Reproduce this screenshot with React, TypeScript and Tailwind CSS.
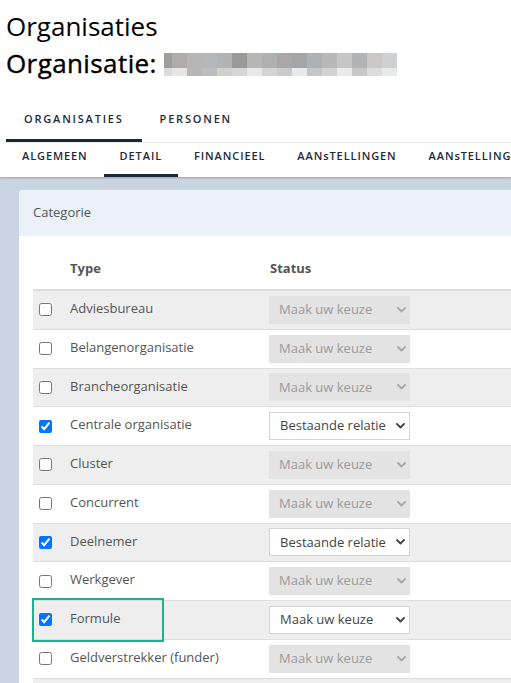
import React from "react";

// pixelated placeholder that hides the organisation name
const BLUR_TOP = ["#a09e9c", "#aeadab", "#b7b6b4", "#b5b8ba", "#b2b3b4", "#9a9a98", "#b7b6b4", "#b0b0b0", "#aba7a5", "#a3a5a7", "#adb1b3", "#b9b8b6", "#c6c6c6", "#b2b3b5", "#c9c8c6", "#cfd0d2"];
const BLUR_BOTTOM = ["#dcdcdc", "#e6e6e6", "#b8b5b3", "#b8bdc0", "#d0d0d0", "#d6d6d6", "#e8e8e8", "#d4d4d4", "#cacaca", "#e8e9ea", "#c6c6c6", "#d2d2d2", "#eaeaea", "#c8c8c8", "#dddddd", "#e8e9eb"];

const ROWS: { label: string; checked: boolean; status: string }[] = [
  { label: "Adviesbureau", checked: false, status: "Maak uw keuze" },
  { label: "Belangenorganisatie", checked: false, status: "Maak uw keuze" },
  { label: "Brancheorganisatie", checked: false, status: "Maak uw keuze" },
  { label: "Centrale organisatie", checked: true, status: "Bestaande relatie" },
  { label: "Cluster", checked: false, status: "Maak uw keuze" },
  { label: "Concurrent", checked: false, status: "Maak uw keuze" },
  { label: "Deelnemer", checked: true, status: "Bestaande relatie" },
  { label: "Werkgever", checked: false, status: "Maak uw keuze" },
  { label: "Formule", checked: true, status: "Maak uw keuze" },
  { label: "Geldverstrekker (funder)", checked: false, status: "Maak uw keuze" },
];

const MAIN_TABS = ["ORGANISATIES", "PERSONEN"];
const SUB_TABS = ["ALGEMEEN", "DETAIL", "FINANCIEEL", "AANsTELLINGEN", "AANsTELLINGEN"];

function Chevron({ disabled }: { disabled: boolean }) {
  return (
    <svg width="9" height="6" viewBox="0 0 9 6" className="shrink-0">
      <path
        d="M1 1 L4.5 4.5 L8 1"
        fill="none"
        stroke={disabled ? "#a8a8a8" : "#444"}
        strokeWidth="1.8"
        strokeLinecap="round"
        strokeLinejoin="round"
      />
    </svg>
  );
}

function StatusSelect({ value, disabled }: { value: string; disabled: boolean }) {
  return (
    <div
      className={
        disabled
          ? "w-[141px] h-[28px] flex items-center justify-between pl-[10px] pr-[4px] bg-[#e3e3e3] text-[#9a9a9a] text-[13px] whitespace-nowrap overflow-hidden"
          : "w-[141px] h-[28px] flex items-center justify-between pl-[10px] pr-[4px] bg-white border border-[#d4d4d4] text-[#444] text-[13px] whitespace-nowrap overflow-hidden"
      }
    >
      <span>{value}</span>
      <Chevron disabled={disabled} />
    </div>
  );
}

export default function App() {
  return (
    <div className="w-[511px] h-[683px] overflow-hidden bg-white font-['Open_Sans',sans-serif] text-black">
      {/* Page title */}
      <div className="px-[6px] pt-[8px]">
        <h1 className="text-[26px] leading-[36px] font-normal">Organisaties</h1>
        <div className="mt-px flex items-center">
          <h2 className="text-[26px] leading-[36px] font-medium tracking-[0.4px] [-webkit-text-stroke:0.4px_black]">Organisatie:</h2>
          <div className="ml-[7px] mt-[2px] flex flex-col">
            <div className="flex">
              {BLUR_TOP.map((c, i) => (
                <div key={i} className={i === 0 ? "w-[8px] h-[15px]" : "w-[15px] h-[15px]"} style={{ backgroundColor: c }} />
              ))}
            </div>
            <div className="flex">
              {BLUR_BOTTOM.map((c, i) => (
                <div key={i} className={i === 0 ? "w-[8px] h-[8px]" : "w-[15px] h-[8px]"} style={{ backgroundColor: c }} />
              ))}
            </div>
          </div>
        </div>
      </div>

      {/* Main tabs */}
      <div className="mt-[17px] relative z-10 shadow-[0_1px_2px_rgba(0,0,0,0.25)]">
        <div className="ml-[6px] flex h-[45px] border-b border-[#e8e8e8]">
          {MAIN_TABS.map((tab, i) => (
            <div
              key={tab}
              className="relative px-[18px] pt-[13px] text-[11px] leading-[16px] font-semibold tracking-[1.8px] text-[#1d2a3a] whitespace-nowrap"
            >
              {tab}
              {i === 0 && <div className="absolute left-0 right-0 bottom-0 h-[3px] bg-[#1b2838]" />}
            </div>
          ))}
        </div>
        <div className="ml-[6px] flex h-[34px] overflow-hidden">
          {SUB_TABS.map((tab, i) => (
            <div
              key={i}
              className="relative px-[16px] pt-[5px] text-[11px] leading-[16px] font-semibold tracking-[0.9px] text-[#1d2a3a] whitespace-nowrap"
            >
              {tab}
              {i === 1 && <div className="absolute left-0 right-0 bottom-0 h-[3px] bg-[#1b2838]" />}
            </div>
          ))}
        </div>
      </div>

      {/* Content */}
      <div className="bg-[#cbd5e1] pl-[19px] pt-[13px] h-full">
        <div className="w-[620px] bg-white rounded-tl-[4px]">
          <div className="h-[46px] bg-[#eaf1f9] rounded-tl-[4px] px-[14px] flex items-center text-[13px] text-[#555]">
            Categorie
          </div>
          <div className="px-[14px] pt-[13px]">
            <div className="relative">
              {/* header */}
              <div className="flex h-[42px] items-center border-b-2 border-[#dddddd] text-[13px] font-bold text-[#555]">
                <div className="w-[29px]" />
                <div className="w-[200px] pl-[8px]">Type</div>
                <div className="pl-[8px]">Status</div>
              </div>
              {ROWS.map((row, i) => (
                <div
                  key={row.label}
                  className={
                    i % 2 === 0
                      ? "flex h-[38.75px] items-center border-b border-[#dddddd] bg-[#eeeeee]"
                      : "flex h-[38.75px] items-center border-b border-[#dddddd] bg-white"
                  }
                >
                  <div className="w-[29px] pl-[6px] flex items-center">
                    <input
                      type="checkbox"
                      defaultChecked={row.checked}
                      className="m-0 w-[13px] h-[13px] accent-[#0075ff]"
                    />
                  </div>
                  <div className="w-[200px] pl-[8px] text-[13px] text-[#555] -mt-[2px] whitespace-nowrap">{row.label}</div>
                  <div className="pl-[7px]">
                    <StatusSelect value={row.status} disabled={!row.checked} />
                  </div>
                </div>
              ))}
              <div className="h-[38.75px] bg-[#eeeeee]" />
              {/* highlight on Formule */}
              <div className="absolute left-[-1px] top-[349px] w-[132px] h-[44px] border-2 border-[#15b493] pointer-events-none" />
            </div>
          </div>
        </div>
      </div>
    </div>
  );
}
